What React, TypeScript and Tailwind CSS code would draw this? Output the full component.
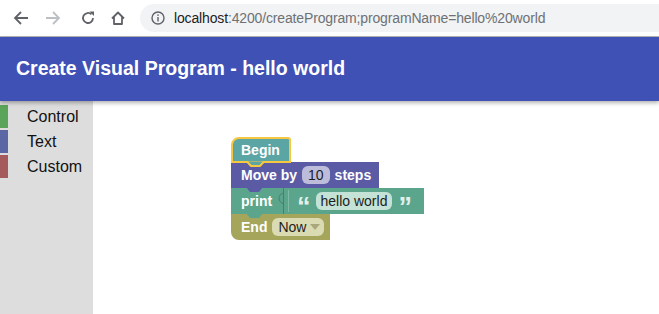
import React from 'react'

const font = { fontFamily: '"Liberation Sans", Arial, Helvetica, sans-serif' }

const Notch: React.FC<{ color: string }> = ({ color }) => (
  <svg className="absolute left-[15px] -bottom-[5px] z-10" width="17" height="6" viewBox="0 0 17 6">
    <path d="M0 0 L4 5 L13 5 L17 0 Z" fill={color} />
  </svg>
)

const BrowserBar: React.FC = () => (
  <div className="h-[37px] bg-white flex items-center border-b border-[#b5b5b5]">
    <div className="flex items-center w-[140px] pl-[13px]">
      <svg width="16" height="16" viewBox="0 0 16 16" className="text-[#5f6368]">
        <path d="M15 8H2.5M8 2L2 8l6 6" fill="none" stroke="currentColor" strokeWidth="1.8" />
      </svg>
      <svg width="16" height="16" viewBox="0 0 16 16" className="text-[#bcc0c4] ml-[16px]">
        <path d="M1 8h12.5M8 2l6 6-6 6" fill="none" stroke="currentColor" strokeWidth="1.8" />
      </svg>
      <svg width="16" height="16" viewBox="0 0 16 16" className="text-[#5f6368] ml-[19px]">
        <path d="M13 8a5 5 0 1 1-1.5-3.6" fill="none" stroke="currentColor" strokeWidth="1.8" />
        <path d="M9.5 1.5h4.5v4.5z" fill="currentColor" />
      </svg>
      <svg width="16" height="16" viewBox="0 0 16 16" className="text-[#5f6368] ml-[14px]">
        <path d="M2 8.5L8 2.5l6 6M4 7v7h8V7" fill="none" stroke="currentColor" strokeWidth="1.8" strokeLinejoin="round" />
      </svg>
    </div>
    <div className="flex-1 h-[28px] bg-[#f1f3f4] rounded-l-full flex items-center pl-[11px] gap-[9px]">
      <svg width="14" height="14" viewBox="0 0 14 14" className="text-[#5f6368]">
        <circle cx="7" cy="7" r="6" fill="none" stroke="currentColor" strokeWidth="1.4" />
        <rect x="6.3" y="6" width="1.4" height="4.5" fill="currentColor" />
        <rect x="6.3" y="3.4" width="1.4" height="1.5" fill="currentColor" />
      </svg>
      <span className="text-[14px] tracking-[-0.15px]" style={font}>
        <span className="text-[#202124]">localhost</span>
        <span className="text-[#6e7174]">:4200/createProgram;programName=hello%20world</span>
      </span>
    </div>
  </div>
)

const categories = [
  { name: 'Control', color: 'bg-[#5ba55b]' },
  { name: 'Text', color: 'bg-[#5b67a5]' },
  { name: 'Custom', color: 'bg-[#a55b5b]' },
]

const Blocks: React.FC = () => (
  <div className="absolute left-[138px] top-[36px] flex flex-col items-start text-white font-bold text-[14px]" style={font}>
    <div className="relative z-20 h-[26px] w-[60px] bg-[#5ba5a5] border-2 border-[#f8c740] rounded-tl-[8px] rounded-tr-[3px] flex items-center pl-[8px]">
      Begin
      <svg className="absolute left-[13px] -bottom-[7px] z-10" width="19" height="7" viewBox="0 0 19 7">
        <path d="M0 0.5 L1 0.5 L5 5 L14 5 L18 0.5 L19 0.5" fill="#5ba5a5" stroke="#f8c740" strokeWidth="2" />
      </svg>
    </div>
    <div className="relative z-[15] -mt-[1px] h-[26px] w-[148px] bg-[#5b5ba5] flex items-center pl-[10px] gap-[5px]">
      <span>Move by</span>
      <span className="h-[18px] px-[6px] rounded-[6px] bg-[#bdbddb] text-[#1d1d1d] font-normal flex items-center">10</span>
      <span>steps</span>
      <Notch color="#5b5ba5" />
    </div>
    <div className="relative z-[12] h-[26px] w-[193px] bg-[#5ba58c] flex items-center">
      <span className="pl-[10px] w-[52px]">print</span>
      <div className="relative h-full flex-1 flex items-center border-l border-[#487f6c]">
        <svg className="absolute -left-[6px] top-[5px]" width="7" height="12" viewBox="0 0 7 12">
          <path d="M6 0 C2 1 1 3 1 5 C1 8 3 10 6 11" fill="none" stroke="#487f6c" strokeWidth="1" />
        </svg>
        <div className="absolute left-[4px] top-[2px] bottom-[2px] w-px bg-[#7fbba6]" />
        <span className="ml-[13px] text-[#e1f0ea] text-[27px] leading-none translate-y-[6px]">“</span>
        <span className="ml-[5px] h-[18px] px-[5px] rounded-[6px] bg-[#c4e2d6] text-[#1d1d1d] font-normal flex items-center">hello world</span>
        <span className="ml-[6px] text-[#e1f0ea] text-[27px] leading-none translate-y-[6px]">”</span>
      </div>
      <Notch color="#5ba58c" />
    </div>
    <div className="relative z-[10] h-[26px] w-[99px] bg-[#a5a55b] rounded-bl-[8px] flex items-center pl-[10px] gap-[5px]">
      <span>End</span>
      <span className="h-[18px] pl-[6px] pr-[4px] rounded-[6px] bg-[#dbdbb3] text-[#1d1d1d] font-normal flex items-center gap-[4px]">
        Now
        <svg width="10" height="6" viewBox="0 0 10 6">
          <path d="M0 0h10L5 6z" fill="#a8a87a" />
        </svg>
      </span>
    </div>
  </div>
)

export default function App() {
  return (
    <div className="w-[659px] h-[314px] bg-white overflow-hidden flex flex-col" style={font}>
      <BrowserBar />
      <div className="relative z-10 h-[64px] bg-[#3f51b5] flex items-center pl-[16px] shadow-[0_2px_4px_rgba(0,0,0,0.3)]">
        <h1 className="text-white font-bold text-[19.5px]">Create Visual Program - hello world</h1>
      </div>
      <div className="flex-1 flex">
        <div className="w-[93px] bg-[#dddddd] pt-[4px] flex flex-col gap-[2px]">
          {categories.map((c) => (
            <div key={c.name} className="h-[23px] flex items-center">
              <div className={`w-[8px] h-full ${c.color}`} />
              <span className="ml-[19px] text-[16px] text-[#111]">{c.name}</span>
            </div>
          ))}
        </div>
        <div className="relative flex-1 bg-white">
          <Blocks />
        </div>
      </div>
    </div>
  )
}
